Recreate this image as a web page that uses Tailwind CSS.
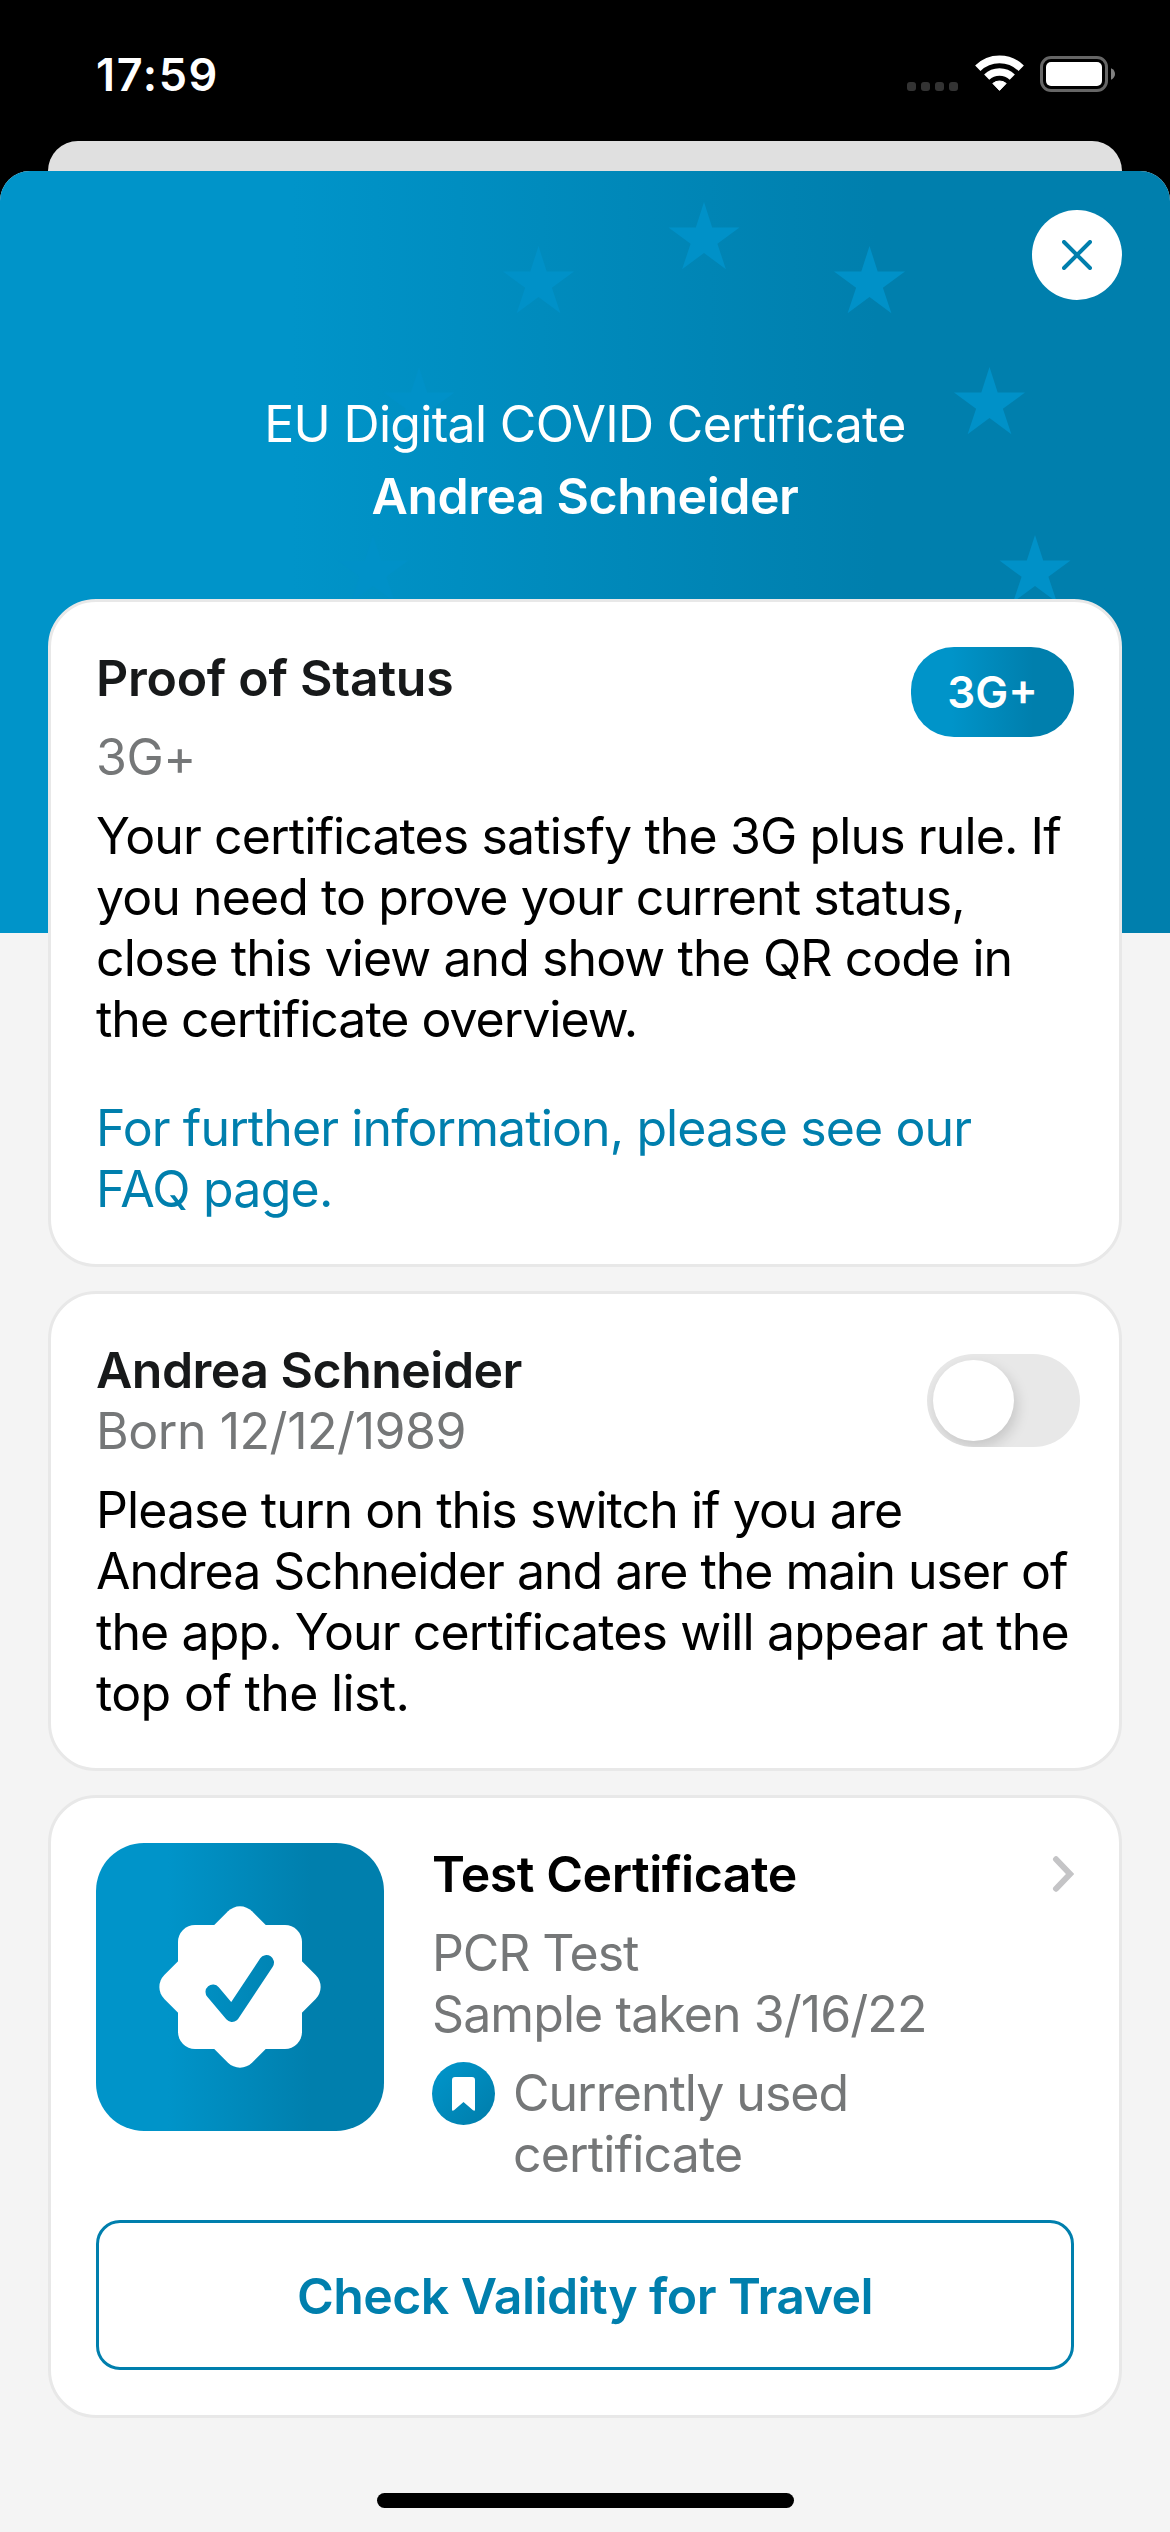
<!DOCTYPE html>
<html lang="en">
<head>
<meta charset="utf-8">
<title>EU Digital COVID Certificate</title>
<script src="https://cdn.jsdelivr.net/npm/@tailwindcss/browser@4"></script>
</head>
<body class="bg-black">
<div class="flex h-[2532px] w-[1170px] flex-col overflow-hidden bg-black font-['Inter',sans-serif] text-[50px] leading-[61px] text-black">

  <!-- Status bar -->
  <header class="flex h-[141px] shrink-0 items-start justify-between pl-24 pr-[55px] pt-12">
    <time class="text-[45px] font-semibold leading-[54px] tracking-[1.63px] text-white">17:59</time>
    <div class="mt-[7px] flex h-[37px] items-end gap-[16.5px]">
      <div class="mb-px flex gap-[5px]">
        <span class="size-[9px] rounded-[3px] bg-[#333]"></span>
        <span class="size-[9px] rounded-[3px] bg-[#333]"></span>
        <span class="size-[9px] rounded-[3px] bg-[#333]"></span>
        <span class="size-[9px] rounded-[3px] bg-[#333]"></span>
      </div>
      <svg class="h-[37px] w-[49px]" viewBox="0 0 49 37" fill="none" stroke="#fff">
        <path d="M2.8 13.2A31 31 0 0 1 46.2 13.2" stroke-width="7.6"/>
        <path d="M11.7 22.2A18.4 18.4 0 0 1 37.3 22.2" stroke-width="7.4"/>
        <path d="M17.8 28.4A10.6 10.6 0 0 1 31.2 28.4L24.5 35.4Z" fill="#fff" stroke-width="1" stroke-linejoin="round"/>
      </svg>
      <svg class="h-[37px] w-[75px]" viewBox="0 0 75 37">
        <rect x="1.5" y="2.500" width="65" height="33" rx="9.5" fill="none" stroke="#666" stroke-width="3"/>
        <rect x="6" y="7" width="56" height="24" rx="5" fill="#fff"/>
        <path d="M71 13.3C73.600 14.400 75 16.500 75 19S73.600 23.600 71 24.700Z" fill="#808080"/>
      </svg>
    </div>
  </header>

  <div class="mx-12 h-[30px] shrink-0 rounded-t-[30px] bg-[#e0e0e0]"></div>

  <!-- Certificate sheet -->
  <main class="relative flex flex-1 flex-col rounded-t-[30px] bg-[#f4f4f4]">
    <div class="absolute inset-x-0 top-0 h-[762px] overflow-hidden rounded-t-[30px] bg-linear-to-r from-[#0094c9] from-25% to-[#007fad] to-75%">
      <svg class="size-full" viewBox="0 171 1170 762" fill="#0091c8">
        <defs><path id="star" d="M0 0L8.200 25.500H35.500L13.400 41.800L21.900 67.200L0 51L-21.900 67.200L-13.400 41.800L-35.500 25.500H-8.200Z"/></defs>
        <use href="#star" x="373" y="535"/>
        <use href="#star" x="419" y="367"/>
        <use href="#star" x="538.500" y="246"/>
        <use href="#star" x="704" y="202"/>
        <use href="#star" x="869.500" y="246"/>
        <use href="#star" x="989.500" y="367"/>
        <use href="#star" x="1035" y="535"/>
      </svg>
    </div>
    <button class="absolute right-12 top-[39px] flex size-[90px] items-center justify-center rounded-full bg-white" aria-label="Close">
      <svg class="size-[30px]" viewBox="0 0 30 30" fill="none" stroke="#007fad" stroke-width="4" stroke-linecap="round"><path d="M2 2L28 28M28 2L2 28"/></svg>
    </button>

    <div class="relative flex flex-col gap-[11px] pt-[223px] text-center text-white">
      <h1 class="tracking-[-0.69px]">EU Digital COVID Certificate</h1>
      <p class="font-semibold tracking-[-0.46px]">Andrea Schneider</p>
    </div>

    <div class="relative mt-[72px] flex flex-col gap-6 px-12">
      <section class="flex flex-col rounded-[48px] border-3 border-[#e8e8e8] bg-white px-[45px] pb-11 pt-[46px]">
        <div class="flex items-start justify-between">
          <div class="flex flex-col gap-[18px]">
            <h2 class="font-semibold tracking-[-0.26px] text-[#17191a]">Proof of Status</h2>
            <p class="tracking-[-0.44px] text-[#757778]">3G+</p>
          </div>
          <span class="-mt-px flex h-[90px] w-[163px] items-center justify-center rounded-[43px] bg-linear-to-r from-[#0094c9] from-25% to-[#007fad] to-75% text-[44px] font-semibold text-white">3G+</span>
        </div>
        <p class="mt-[18px] flex flex-col whitespace-nowrap">
          <span class="tracking-[-0.89px]">Your certificates satisfy the 3G plus rule. If</span>
          <span class="tracking-[-0.91px]">you need to prove your current status,</span>
          <span class="tracking-[-0.92px]">close this view and show the QR code in</span>
          <span class="tracking-[-1.02px]">the certificate overview.</span>
        </p>
        <a class="mt-12 flex flex-col whitespace-nowrap text-[#007fad]">
          <span class="tracking-[-0.89px]">For further information, please see our</span>
          <span class="tracking-[-0.76px]">FAQ page.</span>
        </a>
      </section>

      <section class="flex flex-col rounded-[48px] border-3 border-[#e8e8e8] bg-white px-[45px] pb-11 pt-[46px]">
        <div class="flex items-start justify-between">
          <div>
            <h2 class="font-semibold tracking-[-0.53px] text-[#17191a]">Andrea Schneider</h2>
            <p class="tracking-[-0.45px] text-[#757778]">Born 12/12/1989</p>
          </div>
          <div class="-mr-1.5 mt-[14px] flex h-[93px] w-[153px] overflow-hidden rounded-full bg-[#e8e8e8] p-1.5">
            <span class="size-[81px] rounded-full bg-white shadow-[3px_6px_14px_rgba(0,0,0,0.15)]"></span>
          </div>
        </div>
        <p class="mt-[18px] flex flex-col whitespace-nowrap">
          <span class="tracking-[-0.93px]">Please turn on this switch if you are</span>
          <span class="tracking-[-1.01px]">Andrea Schneider and are the main user of</span>
          <span class="tracking-[-0.9px]">the app. Your certificates will appear at the</span>
          <span class="tracking-[-0.65px]">top of the list.</span>
        </p>
      </section>

      <section class="flex flex-col rounded-[48px] border-3 border-[#e8e8e8] bg-white p-[45px]">
        <div class="flex items-start gap-12">
          <div class="flex size-72 shrink-0 items-center justify-center rounded-[48px] bg-linear-to-r from-[#0094c9] from-25% to-[#007fad] to-75%">
            <svg class="size-[164px]" viewBox="-82 -82 164 164">
              <defs><linearGradient id="tick" gradientUnits="userSpaceOnUse" x1="-72" y1="0" x2="72" y2="0"><stop stop-color="#0094c9"/><stop offset="1" stop-color="#007fad"/></linearGradient></defs>
              <g fill="#fff"><rect x="-62" y="-62" width="124" height="124" rx="17"/><rect x="-62" y="-62" width="124" height="124" rx="17" transform="rotate(45)"/></g>
              <path d="M-27 5L-8 27.500L26.500 -24.500" fill="none" stroke="url(#tick)" stroke-width="15" stroke-linecap="round" stroke-linejoin="round"/>
            </svg>
          </div>
          <div class="flex flex-1 flex-col pt-px">
            <div class="flex items-start justify-between">
              <h2 class="font-semibold tracking-[-0.45px]">Test Certificate</h2>
              <svg class="mt-3 h-9 w-[22px]" viewBox="0 0 22 36" fill="none" stroke="#c4c4c6" stroke-width="6" stroke-linecap="round" stroke-linejoin="miter"><path d="M4 3.300L18 18L4 32.700"/></svg>
            </div>
            <div class="mt-[18px] text-[#757778]">
              <p class="tracking-[-1.09px]">PCR Test</p>
              <p class="tracking-[-0.92px]">Sample taken 3/16/22</p>
            </div>
            <div class="mt-[18px] flex items-start gap-[18px] text-[#757778]">
              <svg class="-mt-px size-[63px]" viewBox="0 0 63 63">
                <defs><linearGradient id="mark" x1="0" y1="0" x2="1" y2="1"><stop offset=".1" stop-color="#0094c9"/><stop offset=".9" stop-color="#007fad"/></linearGradient></defs>
                <circle cx="31.500" cy="31.500" r="31.500" fill="url(#mark)"/>
                <path d="M23 15H40Q43 15 43 18V47.500Q43 49.500 41 48.300L31.500 40L22 48.300Q20 49.500 20 47.500V18Q20 15 23 15Z" fill="#fff"/>
              </svg>
              <p class="flex flex-col">
                <span class="tracking-[-0.99px]">Currently used</span>
                <span class="tracking-[-0.84px]">certificate</span>
              </p>
            </div>
          </div>
        </div>
        <button class="mt-[35px] flex h-[150px] items-center justify-center rounded-[24px] border-3 border-[#007fad] pt-0.5 font-semibold tracking-[-0.57px] text-[#007fad]">Check Validity for Travel</button>
      </section>
    </div>

    <div class="mx-auto mb-6 mt-auto h-[15px] w-[417px] rounded-full bg-black"></div>
  </main>
</div>
</body>
</html>
